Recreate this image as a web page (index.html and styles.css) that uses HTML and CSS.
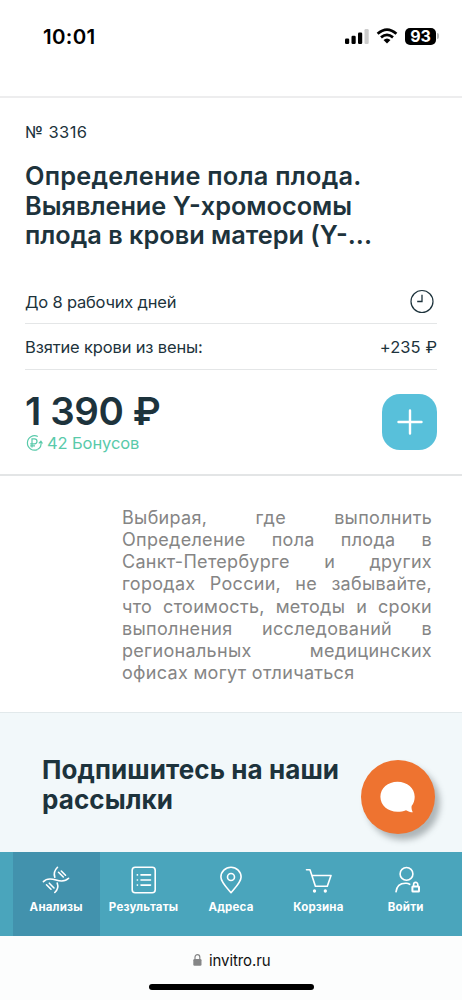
FILE: index.html
```html
<!DOCTYPE html>
<html lang="ru">
<head>
<meta charset="utf-8">
<meta name="viewport" content="width=device-width, initial-scale=1">
<title>invitro.ru</title>
<link rel="stylesheet" href="styles.css">
</head>
<body>
<header class="status">
  <span class="time">10:01</span>
  <div class="indicators">
    <svg class="signal" width="24" height="16" viewBox="0 0 24 16"><rect x="0" y="10.5" width="4.2" height="5.5" rx="1.2"/><rect x="6.5" y="7.8" width="4.2" height="8.2" rx="1.2"/><rect x="13" y="4.5" width="4.2" height="11.500" rx="1.2"/><rect x="19.500" y="1" width="4.2" height="15" rx="1.2" fill="#ccc"/></svg>
    <svg class="wifi" width="22" height="16" viewBox="0 0 22 16"><g fill="none" stroke="#000" stroke-width="2.7"><path d="M1.600 5.800Q11-2.600 20.400 5.800"/><path d="M5 9.400Q11 4.300 17 9.400"/></g><path d="M7.500 12Q11 9 14.500 12L11 15.600Z"/></svg>
    <span class="battery">93</span><i class="battery-cap"></i>
  </div>
</header>
<main>
  <section class="product">
    <div class="code">№ 3316</div>
    <h1 class="title"><span class="title-lead">Определение пола плода.</span><br>Выявление Y-хромосомы<br>плода в крови матери (Y-...</h1>
    <div class="row row-term">
      <span class="term">До 8 рабочих дней</span>
      <svg class="clock" width="26" height="26" viewBox="0 0 26 26" fill="none" stroke="#1d333c"><circle cx="13" cy="12.500" r="11" stroke-width="1.200"/><path d="M13 5.700V12.500H8.200" stroke-width="1.300"/></svg>
    </div>
    <div class="row row-blood"><span class="blood">Взятие крови из вены:</span><span class="fee">+235 ₽</span></div>
    <div class="buy">
      <div class="sum">
        <div class="price">1 390 ₽</div>
        <div class="bonus">
          <svg width="18" height="18" viewBox="0 0 18 18" fill="none" stroke="#59caaa" stroke-width="1.200"><path d="M12.800 2.500A7.200 7.200 0 1 0 12.400 15.600"/><path d="M15.900 7.800A7.200 7.200 0 0 1 12.400 15.600"/><path d="M13.800 9.300L15.900 7.200L17.500 9.500"/><path d="M7 13.500V4.800H9.500A2.500 2.500 0 0 1 9.500 9.800H5.200M5.200 11.800H10"/></svg>
          <span>42 Бонусов</span>
        </div>
      </div>
      <button class="add" aria-label="Добавить"><svg width="26" height="26" viewBox="0 0 26 26"><path d="M13 1.500V24.500M1.500 13H24.500" stroke="#fff" stroke-width="2.400" stroke-linecap="round"/></svg></button>
    </div>
  </section>
  <section class="notice"><p>Выбирая, где выполнить Определение пола плода в Санкт-&#8288;Петербурге и других городах России, не забывайте, что стоимость, методы и сроки выполнения исследований в региональных медицинских офисах могут отличаться</p></section>
  <section class="subscribe">
    <h2>Подпишитесь на наши<br>рассылки</h2>
    <button class="chat" aria-label="Чат"><svg width="36" height="32" viewBox="0 0 36 32"><path d="M17.500 0.800C7.800.8.400 7.300.400 15.800S7.800 30.800 17.500 30.800C20.500 30.800 23.400 30.200 26 29.200C28 30.300 30.500 31.300 32.800 31.300C31.800 29.400 31.300 27.500 31.600 25C33.700 22.500 34.700 19.300 34.700 15.800C34.700 7.300 27.200.8 17.500.8Z" fill="#fff"/></svg></button>
  </section>
</main>
<nav class="tabs">
  <a class="tab active"><svg width="28" height="28" viewBox="0 0 28 28"><path d="M1.400 15.600C4.400 12.300 8.500 12.300 14 14S23.500 15.500 26.600 12.300M15.500 1.300C12.300 4.500 11.500 7.500 12.800 11.300M12.800 26.500C16 23.500 16.500 20.500 15.200 17M16.500 6.300L21.300 11M19.300 5L23.500 9.200M4.500 18.800L9 23.200M7.300 17.200L12 22"/></svg><span>Анализы</span></a>
  <a class="tab"><svg width="28" height="28" viewBox="0 0 28 28"><rect x="2.200" y="1.200" width="23" height="25.500" rx="3"/><path d="M11 8.900H20.500M11 14H20.500M11 19.100H20.500"/><path d="M7.300 8.900H7.500M7.300 14H7.500M7.300 19.100H7.500"/></svg><span>Результаты</span></a>
  <a class="tab"><svg width="28" height="28" viewBox="0 0 28 28"><path d="M14 26.700C10.500 22.500 3.900 16.200 3.900 11A10.100 9.800 0 0 1 24.100 11C24.100 16.200 17.500 22.500 14 26.700Z"/><circle cx="14" cy="11" r="3.500"/></svg><span>Адреса</span></a>
  <a class="tab"><svg width="28" height="28" viewBox="0 0 28 28"><path d="M2.500 3.700H6L11.400 20.300H23.300L27 9.500H8"/><circle cx="10.500" cy="25" r="1" fill="#fff" stroke-width="1.300"/><circle cx="21.300" cy="25" r="1" fill="#fff" stroke-width="1.300"/></svg><span>Корзина</span></a>
  <a class="tab"><svg width="28" height="28" viewBox="0 0 28 28"><circle cx="14.500" cy="7.900" r="6.400"/><path d="M4 25.800C4.700 19.500 9.200 17 14.200 17.200C15.700 17.300 16.700 17.700 17.700 18.300"/><rect x="20.400" y="20.500" width="6.600" height="5" rx=".5" stroke-width="2"/><path d="M21.600 20V18.500A2.100 2.100 0 0 1 25.800 18.500V20"/></svg><span>Войти</span></a>
</nav>
<footer class="browser">
  <div class="address"><svg width="9" height="12" viewBox="0 0 9 12"><rect x=".3" y="5" width="8.200" height="6.800" rx="1.200" fill="#858687"/><path d="M2 5.500V3.200A2.400 2.500 0 0 1 6.800 3.200V5.500" fill="none" stroke="#858687" stroke-width="1.200"/></svg><span>invitro.ru</span></div>
  <div class="home"></div>
</footer>
</body>
</html>
```
FILE: styles.css
```css
* { box-sizing: border-box; }
body { margin: 0; width: 462px; height: 1000px; overflow: hidden; display: flex; flex-direction: column; background: #fff; color: #1d333c; font-family: Inter, "Noto Sans", sans-serif; }
button { border: 0; padding: 0; display: flex; align-items: center; justify-content: center; }
svg { display: block; flex: none; }
h1, h2, p { margin: 0; }

.status { height: 98px; flex: none; border-bottom: 2px solid #ededee; display: flex; justify-content: space-between; align-items: flex-start; padding: 24px 23px 0 43px; color: #000; }
.time { font-size: 20.500px; line-height: 26px; font-weight: 600; letter-spacing: .3px; }
.indicators { display: flex; align-items: center; height: 24px; }
.signal { margin-right: 7px; }
.wifi { margin-right: 7px; }
.battery { width: 31px; height: 17px; border-radius: 5px; background: #000; color: #fff; font-size: 16px; line-height: 17px; font-weight: 700; text-align: center; }
.battery-cap { width: 2px; height: 6px; margin-left: 1px; border-radius: 0 2px 2px 0; background: #bbb; }

.product { height: 378px; border-bottom: 2px solid #e3e5e6; padding: 23px 25px 0; }
.code { font-size: 16.500px; line-height: 22px; letter-spacing: .4px; }
.title { margin-top: 18px; font-size: 25.300px; line-height: 29.700px; font-weight: 600; white-space: nowrap; }
.title-lead { letter-spacing: .25px; }
.row { display: flex; justify-content: space-between; align-items: center; border-bottom: 1px solid #e4e6e7; font-size: 16.500px; }
.row-term { margin-top: 30px; height: 44px; padding-right: 2px; }
.row-blood { height: 46px; }
.term { letter-spacing: -.2px; padding-top: 1px; }
.blood { letter-spacing: -.15px; }
.fee { letter-spacing: .05px; }
.buy { display: flex; justify-content: space-between; padding-top: 18px; }
.price { font-size: 38.500px; line-height: 46px; font-weight: 600; letter-spacing: -.4px; white-space: nowrap; }
.bonus { display: flex; align-items: center; gap: 4px; margin-top: -2px; font-size: 16.500px; line-height: 22px; letter-spacing: -.1px; color: #59caaa; }
.add { width: 55px; height: 56px; margin-top: 6px; border-radius: 18px; background: #58c0da; }

.notice { height: 236px; padding: 31px 30px 0 122px; }
.notice p { font-size: 18px; line-height: 22.150px; letter-spacing: .3px; color: #858585; text-align: justify; }

.subscribe { position: relative; height: 140px; border-top: 1px solid #e2e9eb; background: #f2f8fa; padding: 42px 42px 0; }
.subscribe h2 { font-size: 26px; line-height: 29.500px; font-weight: 700; letter-spacing: .08px; white-space: nowrap; }
.chat { position: absolute; left: 361px; top: 47px; width: 74px; height: 74px; border-radius: 50%; background: #ee7330; box-shadow: 5px 6px 6px rgba(70, 80, 85, .4); }

.tabs { height: 84px; flex: none; display: grid; grid-template-columns: repeat(5, 87.400px); padding-left: 12.500px; background: #4aa5bc; }
.tab { display: flex; flex-direction: column; align-items: center; padding-top: 14px; color: #fff; font-size: 11.500px; line-height: 16px; font-weight: 700; letter-spacing: .2px; }
.tab.active { background: #4292ad; }
.tab svg { fill: none; stroke: #fff; stroke-width: 1.600; stroke-linecap: round; stroke-linejoin: round; }
.tab span { margin-top: 5px; }

.browser { height: 64px; flex: none; background: #fcfdfd; color: #111; }
.address { display: flex; align-items: center; gap: 7px; height: 22px; margin: 13px 0 0 193px; font-size: 15px; letter-spacing: -.1px; }
.home { width: 165px; height: 6px; margin: 13px 0 0 149px; border-radius: 3px; background: #000; }
```
